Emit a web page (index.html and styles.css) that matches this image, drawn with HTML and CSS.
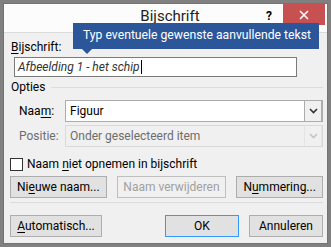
FILE: index.html
```html
<!DOCTYPE html>
<html lang="nl">
<head>
    <meta charset="UTF-8">
    <title>Bijschrift</title>
    <link rel="stylesheet" href="styles.css">
</head>
<body>

<div class="dialog">
    <div class="titlebar">
        <span class="title">Bijschrift</span>
        <span class="help">?</span>
        <span class="close">
            <svg width="10" height="10" viewBox="0 0 10 10"><path d="M1 1 L9 9 M9 1 L1 9" stroke="#fff" stroke-width="1.6"/></svg>
        </span>
    </div>

    <!-- tooltip over the caption field -->
    <div class="tooltip">Typ eventuele gewenste aanvullende tekst</div>

    <div class="content">
        <div class="label"><u>B</u>ijschrift:</div>
        <div class="textbox"><i>Afbeelding 1 - het schip</i><span class="caret"></span></div>

        <div class="group">
            <span>Opties</span>
            <span class="rule"></span>
        </div>

        <div class="row">
            <span class="row-label">Naa<u>m</u>:</span>
            <div class="combo">
                <span class="combo-text">Figuur</span>
                <span class="combo-btn">
                    <svg width="9" height="6" viewBox="0 0 9 6"><path d="M1 1 L4.5 4.5 L8 1" fill="none" stroke="#333" stroke-width="1.6"/></svg>
                </span>
            </div>
        </div>
        <div class="row disabled">
            <span class="row-label">Positie:</span>
            <div class="combo">
                <span class="combo-text">Onder geselecteerd item</span>
                <span class="combo-btn">
                    <svg width="9" height="6" viewBox="0 0 9 6"><path d="M1 1 L4.5 4.5 L8 1" fill="none" stroke="#c4c4c4" stroke-width="1.6"/></svg>
                </span>
            </div>
        </div>

        <div class="check">
            <span class="box"></span>
            <span>Naam <u>n</u>iet opnemen in bijschrift</span>
        </div>

        <div class="buttons">
            <button class="btn w-new">Ni<u>e</u>uwe naam...</button>
            <button class="btn w-del" disabled>Naam verwijderen</button>
            <button class="btn w-num">N<u>u</u>mmering...</button>
        </div>

        <div class="separator"></div>

        <div class="footer">
            <button class="btn w-auto"><u>A</u>utomatisch...</button>
            <span class="spacer"></span>
            <button class="btn w-ok default">OK</button>
            <button class="btn w-ok">Annuleren</button>
        </div>
    </div>
</div>

</body>
</html>
```

FILE: styles.css
```css
body {
    margin: 0;
    padding: 3px;
    background-color: #808080;
    font-family: Roboto, sans-serif;
    font-size: 12px;
    color: #000;
}
u {
    text-decoration-thickness: 1px;
    text-underline-offset: 2px;
}
.dialog {
    position: relative;
    width: 325px;
    height: 241px;
    box-sizing: border-box;
    border: 1px solid #2b8cad;
    background-color: #f0f0f0;
}
.titlebar {
    display: flex;
    align-items: flex-start;
    height: 28px;
    background-color: #fcfcfc;
    border-bottom: 1px solid #dadada;
}
.title {
    flex: 1;
    text-align: center;
    font-size: 15px;
    line-height: 24px;
    padding-left: 70px;
    color: #222;
}
.help {
    width: 17px;
    font-weight: bold;
    font-size: 12px;
    line-height: 18px;
    margin-top: 3px;
}
.close {
    display: flex;
    align-items: center;
    justify-content: center;
    width: 42px;
    height: 21px;
    margin-right: 2px;
    background-color: #c75050;
}
.tooltip {
    position: absolute;
    left: 69px;
    top: 19px;
    width: 246px;
    height: 26px;
    box-sizing: border-box;
    padding-left: 10px;
    background-color: #2b579a;
    color: #fff;
    font-size: 12.2px;
    line-height: 25px;
    white-space: nowrap;
}
.tooltip::after {
    content: "";
    position: absolute;
    left: 9px;
    top: 26px;
    border-left: 5px solid transparent;
    border-right: 5px solid transparent;
    border-top: 5px solid #2b579a;
}
.content {
    padding: 6px 4px 0 6px;
}
.label {
    line-height: 16px;
    margin-left: 1px;
}
.textbox {
    width: 283px;
    height: 20px;
    box-sizing: border-box;
    margin: 2px 0 0 4px;
    padding-left: 3px;
    border: 1px solid #7a7a7a;
    background-color: #fff;
    line-height: 18px;
    color: #333;
    display: flex;
    align-items: center;
}
.caret {
    width: 1px;
    height: 14px;
    background-color: #000;
    margin-left: 1px;
}
.group {
    display: flex;
    align-items: center;
    margin: 2px 0 0 1px;
    line-height: 16px;
}
.rule {
    flex: 1;
    height: 1px;
    margin-left: 6px;
    background-color: #dcdcdc;
}
.row {
    display: flex;
    align-items: center;
    margin-top: 5px;
}
.row + .row {
    margin-top: 3px;
}
.row-label {
    width: 46px;
    padding-left: 9px;
}
.combo {
    display: flex;
    width: 258px;
    height: 22px;
    box-sizing: border-box;
    border: 1px solid #acacac;
    background-color: #fff;
}
.combo-text {
    flex: 1;
    padding-left: 4px;
    line-height: 20px;
}
.combo-btn {
    display: flex;
    align-items: center;
    justify-content: center;
    width: 16px;
    border-left: 1px solid #acacac;
    border-right: 1px solid #acacac;
    background-color: #f0f0f0;
}
.disabled .row-label {
    color: #6d6d6d;
}
.disabled .combo {
    border-color: #d9d9d9;
    background-color: #f0f0f0;
}
.disabled .combo-text {
    color: #6d6d6d;
}
.disabled .combo-btn {
    border-color: #e3e3e3;
}
.check {
    display: flex;
    align-items: center;
    margin: 9px 0 0 0;
    line-height: 16px;
}
.box {
    width: 13px;
    height: 13px;
    box-sizing: border-box;
    border: 1px solid #333;
    background-color: #fff;
    margin-right: 4px;
}
.buttons {
    display: flex;
    gap: 10px;
    margin-top: 4px;
}
.btn {
    height: 22px;
    box-sizing: border-box;
    padding: 0;
    border: 1px solid #adadad;
    background-color: #e1e1e1;
    font-family: Roboto, sans-serif;
    font-size: 12px;
    color: #000;
}
.btn:disabled {
    border-color: #bfbfbf;
    background-color: #f0f0f0;
    color: #a0a0a0;
}
.w-new { width: 97px; }
.w-del { width: 110px; }
.w-num { width: 87px; }
.w-auto { width: 92px; }
.w-ok { width: 74px; }
.default {
    border-color: #3399ff;
    margin-right: 10px;
}
.separator {
    height: 1px;
    margin: 4px 0 0 0;
    background-color: #dcdcdc;
}
.footer {
    display: flex;
    margin-top: 12px;
}
.spacer {
    flex: 1;
}
```
